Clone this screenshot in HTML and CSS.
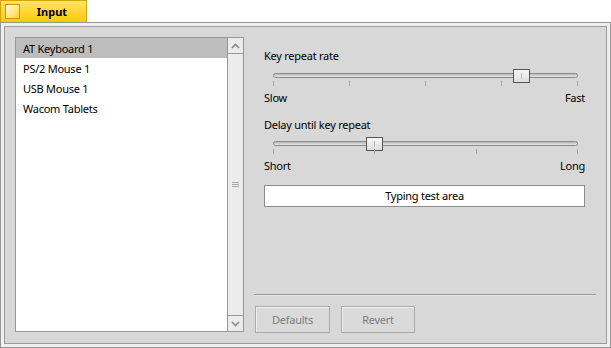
FILE: index.html
```html
<!DOCTYPE html>
<html>
<head>
    <title>Input</title>
    <link rel="stylesheet" href="styles.css">
</head>
<body>
    <!-- Window tab -->
    <div class="tab">
        <span class="zoom-box"></span>
        <span class="tab-title">Input</span>
    </div>

    <div class="frame">
        <div class="content">

            <!-- Device list -->
            <div class="device-list">
                <ul class="items">
                    <li class="item selected">AT Keyboard 1</li>
                    <li class="item">PS/2 Mouse 1</li>
                    <li class="item">USB Mouse 1</li>
                    <li class="item">Wacom Tablets</li>
                </ul>
                <div class="scrollbar">
                    <div class="arrow arrow-up">
                        <svg width="9" height="6" viewBox="0 0 9 6"><path d="M1 5 L4.5 1.5 L8 5" fill="none" stroke="#8a8a8a" stroke-width="1.6"/></svg>
                    </div>
                    <div class="grip"><span></span><span></span><span></span></div>
                    <div class="arrow arrow-down">
                        <svg width="9" height="6" viewBox="0 0 9 6"><path d="M1 1 L4.5 4.5 L8 1" fill="none" stroke="#8a8a8a" stroke-width="1.6"/></svg>
                    </div>
                </div>
            </div>

            <!-- Keyboard settings -->
            <div class="settings">
                <div class="controls">
                    <p class="label">Key repeat rate</p>
                    <div class="slider">
                        <div class="track"></div>
                        <div class="thumb" style="left: 240px"><span></span></div>
                        <div class="ticks"><i></i><i></i><i></i><i></i><i></i></div>
                    </div>
                    <div class="limits"><span>Slow</span><span>Fast</span></div>

                    <p class="label label-second">Delay until key repeat</p>
                    <div class="slider">
                        <div class="track"></div>
                        <div class="thumb" style="left: 93px"><span></span></div>
                        <div class="ticks"><i></i><i></i><i></i><i></i></div>
                    </div>
                    <div class="limits"><span>Short</span><span>Long</span></div>

                    <div class="test-area">Typing test area</div>
                </div>

                <div class="separator"></div>
                <div class="buttons">
                    <button class="button" disabled>Defaults</button>
                    <button class="button button-revert" disabled>Revert</button>
                </div>
            </div>
        </div>
    </div>
</body>
</html>
```

FILE: styles.css
```css
/* Haiku style Input preferences */

body {
    margin: 0;
    background-color: #fff;
    font-family: "Noto Sans", "DejaVu Sans", sans-serif;
    font-size: 11px;
    letter-spacing: -0.25px;
    color: #000;
    width: 611px;
    height: 348px;
    overflow: hidden;
}

.tab {
    height: 22px;
    width: 87px;
    border: 1px solid #d9a400;
    border-bottom: none;
    box-sizing: border-box;
    background: linear-gradient(to bottom, #ffe36a, #ffcb00);
    display: flex;
    align-items: center;
}

.zoom-box {
    width: 13px;
    height: 13px;
    margin-left: 4px;
    border: 1px solid #c69500;
    background: linear-gradient(135deg, #fffbe4, #ffd430);
}

.tab-title {
    flex: 1;
    text-align: center;
    font-weight: bold;
    font-size: 11px;
    letter-spacing: 0;
    padding-right: 2px;
}

.frame {
    height: 326px;
    box-sizing: border-box;
    border: 1px solid #969696;
    background-color: #efefef;
    padding: 3px;
}

.content {
    height: 100%;
    box-sizing: border-box;
    border: 1px solid #9a9a9a;
    background-color: #d8d8d8;
    display: flex;
    padding: 10px 10px 10px 10px;
}

.device-list {
    width: 229px;
    height: 295px;
    box-sizing: border-box;
    border: 1px solid #989898;
    background-color: #fff;
    display: flex;
}

.items {
    flex: 1;
    list-style: none;
    margin: 0;
    padding: 0;
}

.item {
    height: 20px;
    line-height: 21px;
    padding-left: 7px;
}

.item.selected {
    background-color: #bdbdbd;
}

.scrollbar {
    width: 15px;
    border-left: 1px solid #989898;
    background-color: #ececec;
    display: flex;
    flex-direction: column;
}

.arrow {
    height: 15px;
    display: flex;
    align-items: center;
    justify-content: center;
}

.arrow-up {
    border-bottom: 1px solid #989898;
}

.arrow-down {
    border-top: 1px solid #989898;
}

.grip {
    flex: 1;
    display: flex;
    flex-direction: column;
    justify-content: center;
    align-items: center;
    gap: 1px;
}

.grip span {
    width: 7px;
    height: 1px;
    background-color: #a8a8a8;
}

.settings {
    width: 342px;
    margin-left: 10px;
    display: flex;
    flex-direction: column;
}

.controls {
    flex: 1;
    padding-left: 10px;
}

.label {
    margin: 0;
    height: 15px;
    line-height: 15px;
    margin-top: 11px;
}

.label-second {
    margin-top: 12px;
}

.slider {
    position: relative;
    width: 305px;
    height: 19px;
    margin-left: 9px;
    margin-top: 4px;
}

.label-second + .slider {
    margin-top: 3px;
}

.track {
    position: absolute;
    left: 0;
    right: 0;
    top: 6px;
    height: 5px;
    box-sizing: border-box;
    border: 1px solid #8a8a8a;
    border-radius: 3px;
    background: linear-gradient(to bottom, #b8b8b8, #e6e6e6);
}

.thumb {
    position: absolute;
    top: 2px;
    width: 17px;
    height: 14px;
    box-sizing: border-box;
    border: 1px solid #555;
    background: linear-gradient(to bottom, #f6f6f6, #dedede);
    display: flex;
    justify-content: center;
    align-items: center;
}

.thumb span {
    width: 1px;
    height: 6px;
    background-color: #bbb;
}

.ticks {
    position: absolute;
    left: 0;
    right: 0;
    top: 14px;
    height: 5px;
    display: flex;
    justify-content: space-between;
}

.ticks i {
    width: 1px;
    height: 5px;
    background-color: #a5a5a5;
}

.limits {
    width: 321px;
    display: flex;
    justify-content: space-between;
    height: 15px;
    line-height: 15px;
    margin-top: 4px;
}

.test-area {
    width: 321px;
    height: 22px;
    box-sizing: border-box;
    margin-top: 12px;
    border: 1px solid #8c8c8c;
    background-color: #fff;
    text-align: center;
    line-height: 20px;
}

.separator {
    height: 1px;
    background-color: #999;
    border-bottom: 1px solid #e4e4e4;
}

.buttons {
    display: flex;
    gap: 11px;
    padding-left: 1px;
    margin-top: 10px;
}

.button {
    width: 75px;
    height: 27px;
    border: 1px solid #aaa;
    box-shadow: inset 1px 1px 0 #eee;
    background-color: #dadada;
    font-family: "Noto Sans", "DejaVu Sans", sans-serif;
    font-size: 11px;
    letter-spacing: -0.25px;
    color: #7c7c7c;
    padding: 0;
}

.button-revert {
    width: 74px;
}
```
